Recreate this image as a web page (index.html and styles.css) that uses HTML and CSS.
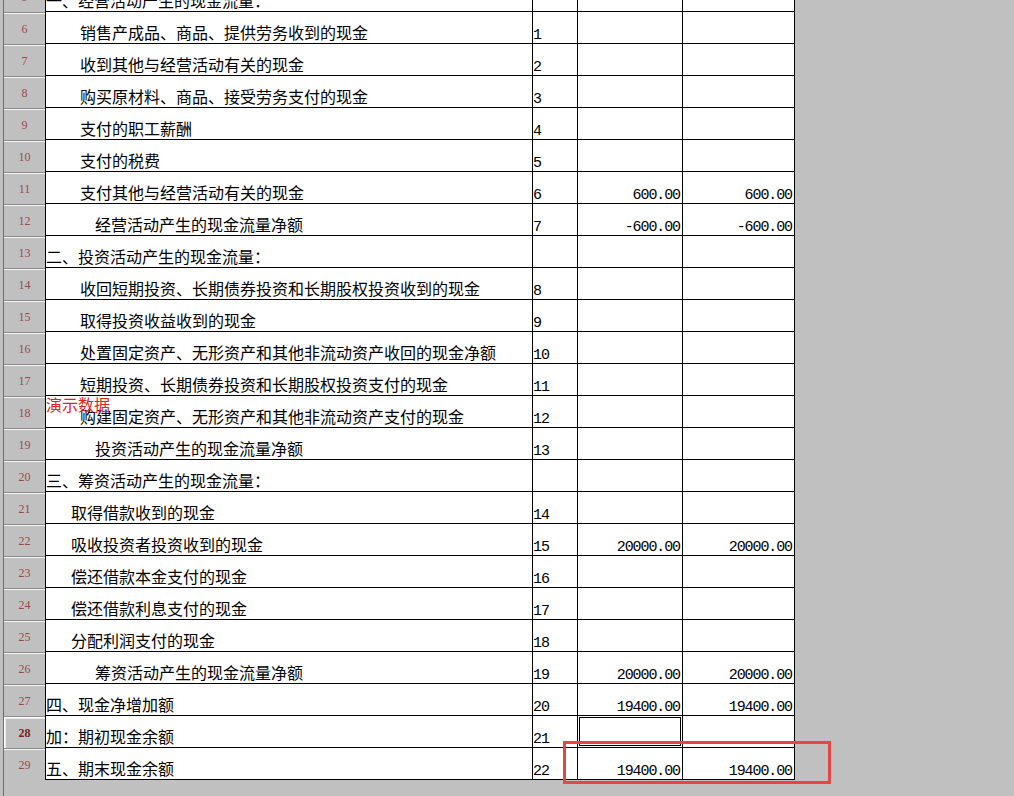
FILE: index.html
```html
<!DOCTYPE html>
<html lang="zh-CN">
<head>
<meta charset="utf-8">
<title>现金流量表</title>
<link rel="stylesheet" href="styles.css">
</head>
<body>
<div class="sheet">
  <div class="row first"><div class="rh">5</div><div class="c name">一、经营活动产生的现金流量：</div><div class="c num"></div><div class="c amt"></div><div class="c amt last"></div></div>
  <div class="row"><div class="rh">6</div><div class="c name i2">销售产成品、商品、提供劳务收到的现金</div><div class="c num">1</div><div class="c amt"></div><div class="c amt last"></div></div>
  <div class="row"><div class="rh">7</div><div class="c name i2">收到其他与经营活动有关的现金</div><div class="c num">2</div><div class="c amt"></div><div class="c amt last"></div></div>
  <div class="row"><div class="rh">8</div><div class="c name i2">购买原材料、商品、接受劳务支付的现金</div><div class="c num">3</div><div class="c amt"></div><div class="c amt last"></div></div>
  <div class="row"><div class="rh">9</div><div class="c name i2">支付的职工薪酬</div><div class="c num">4</div><div class="c amt"></div><div class="c amt last"></div></div>
  <div class="row"><div class="rh">10</div><div class="c name i2">支付的税费</div><div class="c num">5</div><div class="c amt"></div><div class="c amt last"></div></div>
  <div class="row"><div class="rh">11</div><div class="c name i2">支付其他与经营活动有关的现金</div><div class="c num">6</div><div class="c amt">600.00</div><div class="c amt last">600.00</div></div>
  <div class="row"><div class="rh">12</div><div class="c name i3">经营活动产生的现金流量净额</div><div class="c num">7</div><div class="c amt">-600.00</div><div class="c amt last">-600.00</div></div>
  <div class="row"><div class="rh">13</div><div class="c name">二、投资活动产生的现金流量：</div><div class="c num"></div><div class="c amt"></div><div class="c amt last"></div></div>
  <div class="row"><div class="rh">14</div><div class="c name i2">收回短期投资、长期债券投资和长期股权投资收到的现金</div><div class="c num">8</div><div class="c amt"></div><div class="c amt last"></div></div>
  <div class="row"><div class="rh">15</div><div class="c name i2">取得投资收益收到的现金</div><div class="c num">9</div><div class="c amt"></div><div class="c amt last"></div></div>
  <div class="row"><div class="rh">16</div><div class="c name i2">处置固定资产、无形资产和其他非流动资产收回的现金净额</div><div class="c num">10</div><div class="c amt"></div><div class="c amt last"></div></div>
  <div class="row"><div class="rh">17</div><div class="c name i2">短期投资、长期债券投资和长期股权投资支付的现金</div><div class="c num">11</div><div class="c amt"></div><div class="c amt last"></div></div>
  <div class="row"><div class="rh">18</div><div class="c name i2">购建固定资产、无形资产和其他非流动资产支付的现金</div><div class="c num">12</div><div class="c amt"></div><div class="c amt last"></div></div>
  <div class="row"><div class="rh">19</div><div class="c name i3">投资活动产生的现金流量净额</div><div class="c num">13</div><div class="c amt"></div><div class="c amt last"></div></div>
  <div class="row"><div class="rh">20</div><div class="c name">三、筹资活动产生的现金流量：</div><div class="c num"></div><div class="c amt"></div><div class="c amt last"></div></div>
  <div class="row"><div class="rh">21</div><div class="c name i1">取得借款收到的现金</div><div class="c num">14</div><div class="c amt"></div><div class="c amt last"></div></div>
  <div class="row"><div class="rh">22</div><div class="c name i1">吸收投资者投资收到的现金</div><div class="c num">15</div><div class="c amt">20000.00</div><div class="c amt last">20000.00</div></div>
  <div class="row"><div class="rh">23</div><div class="c name i1">偿还借款本金支付的现金</div><div class="c num">16</div><div class="c amt"></div><div class="c amt last"></div></div>
  <div class="row"><div class="rh">24</div><div class="c name i1">偿还借款利息支付的现金</div><div class="c num">17</div><div class="c amt"></div><div class="c amt last"></div></div>
  <div class="row"><div class="rh">25</div><div class="c name i1">分配利润支付的现金</div><div class="c num">18</div><div class="c amt"></div><div class="c amt last"></div></div>
  <div class="row"><div class="rh">26</div><div class="c name i3">筹资活动产生的现金流量净额</div><div class="c num">19</div><div class="c amt">20000.00</div><div class="c amt last">20000.00</div></div>
  <div class="row"><div class="rh">27</div><div class="c name">四、现金净增加额</div><div class="c num">20</div><div class="c amt">19400.00</div><div class="c amt last">19400.00</div></div>
  <div class="row"><div class="rh active">28</div><div class="c name">加：期初现金余额</div><div class="c num">21</div><div class="c amt selected"></div><div class="c amt last"></div></div>
  <div class="row"><div class="rh">29</div><div class="c name">五、期末现金余额</div><div class="c num">22</div><div class="c amt">19400.00</div><div class="c amt last">19400.00</div></div>

  <div class="watermark">演示数据</div>
  <div class="highlight"></div>
</div>
</body>
</html>
```
FILE: styles.css
```css
html, body {
  margin: 0;
  padding: 0;
  background: #c0c0c0;
  overflow: hidden;
}

.sheet {
  position: relative;
  display: flow-root;
  margin-left: 3px;
  border-left: 1px solid #6e6e6e;
  min-height: 796px;
  box-sizing: border-box;
}

.row {
  display: grid;
  grid-template-columns: 41px 487px 45px 105px 113px;
  height: 32px;
}

.row.first {
  margin-top: -20px;
}

.rh {
  box-sizing: border-box;
  background: #c0c0c0;
  border-top: 1px solid #8a8a8a;
  box-shadow: inset 0 1px 0 #f4f4f4;
  display: flex;
  align-items: center;
  justify-content: center;
  font-family: "Liberation Serif", serif;
  font-size: 12px;
  color: #9a4a4a;
  padding-top: 1px;
}

.rh.active {
  box-shadow: inset 1px 1px 0 #ffffff, inset 2px 2px 0 #e8e8e8;
  color: #7a1e1e;
  font-weight: bold;
}

.c {
  box-sizing: border-box;
  background: #ffffff;
  border-left: 1px solid #000;
  border-bottom: 1px solid #000;
  display: flex;
  align-items: flex-end;
  white-space: nowrap;
  color: #000;
}

.c.last {
  border-right: 1px solid #000;
}

.name {
  font-family: "Noto Sans CJK SC", "Noto Sans", sans-serif;
  font-size: 16px;
  line-height: 16px;
  padding-bottom: 3px;
}

.name.i1 { padding-left: 25px; }
.name.i2 { padding-left: 34px; }
.name.i3 { padding-left: 49px; }

.num,
.amt {
  font-family: "Liberation Mono", monospace;
  font-size: 15px;
  line-height: 14px;
  letter-spacing: -1.1px;
  padding-bottom: 0;
}

.num {
  padding-left: 0;
}

.amt {
  justify-content: flex-end;
  padding-right: 2px;
}

.amt.selected {
  box-shadow: inset 0 0 0 1px #ffffff, inset 0 0 0 2px #000000;
}

.watermark {
  position: absolute;
  left: 42px;
  top: 396px;
  font-family: "Noto Sans CJK SC", "Noto Sans", sans-serif;
  font-size: 16px;
  line-height: 16px;
  color: #e02424;
}

.highlight {
  position: absolute;
  left: 559px;
  top: 741px;
  width: 268px;
  height: 43px;
  box-sizing: border-box;
  border: 3px solid #e64545;
}
```
